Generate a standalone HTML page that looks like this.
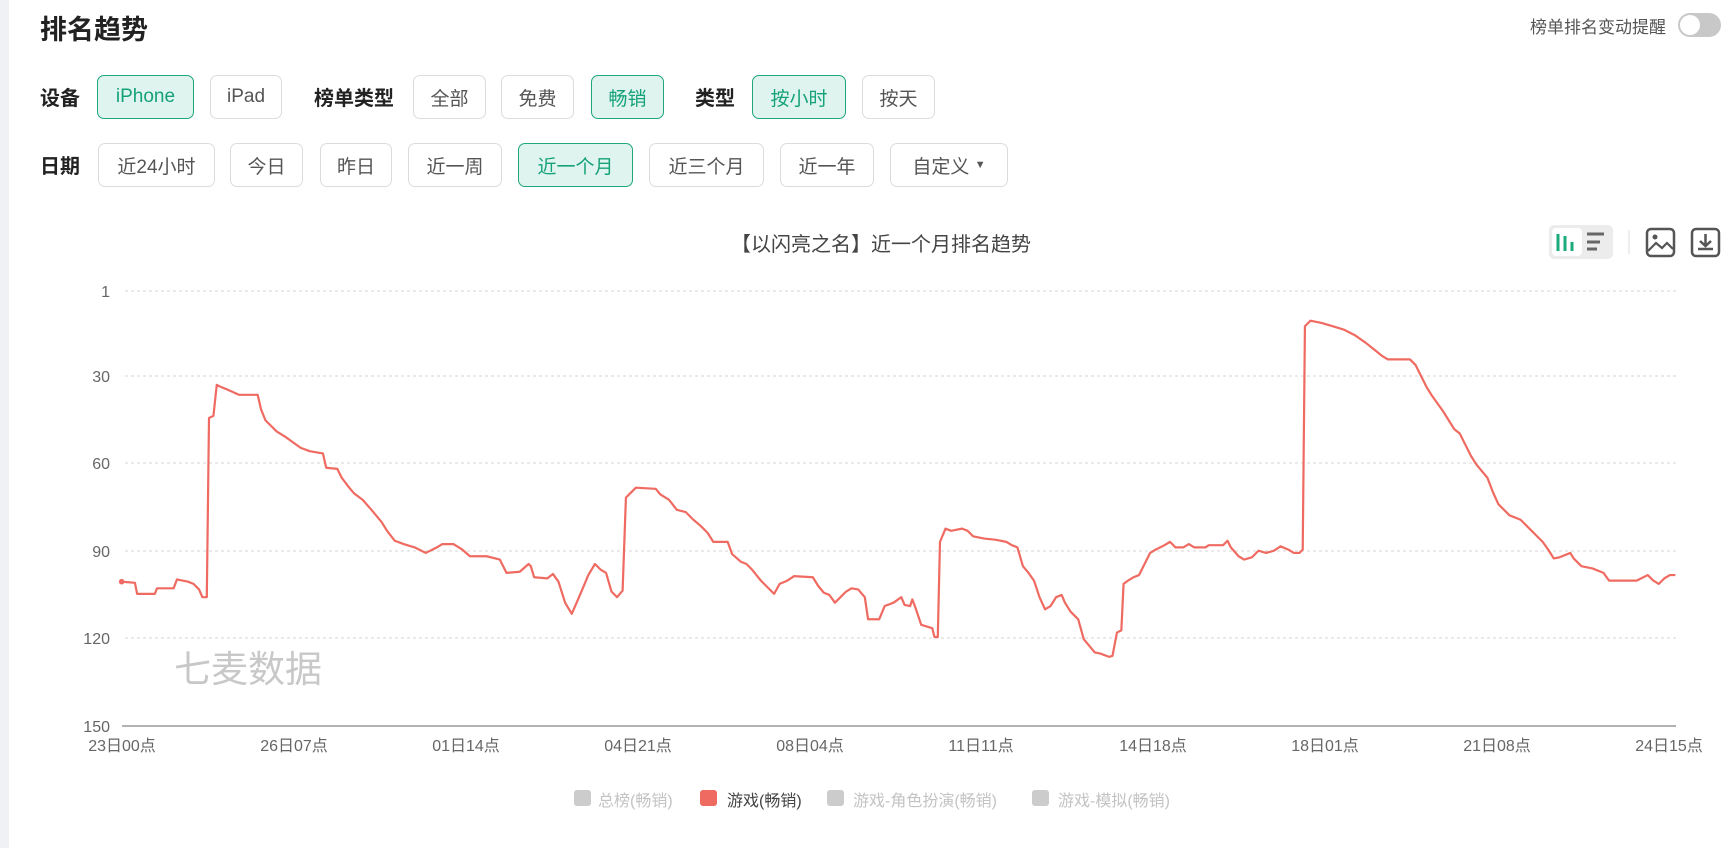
<!DOCTYPE html>
<html><head><meta charset="utf-8">
<style>
*{margin:0;padding:0;box-sizing:border-box}
body{width:1734px;height:848px;background:#fff;position:relative;overflow:hidden;font-family:"Liberation Sans","Noto Sans CJK SC",sans-serif;color:#333}
.strip{position:absolute;left:0;top:0;width:9px;height:848px;background:#f0f1f5}
.t{position:absolute;white-space:nowrap}
.title{left:40px;top:8px;font-size:27px;font-weight:bold;color:#222}
.lbl{font-size:20px;font-weight:bold;color:#222;line-height:43px}
.btn{position:absolute;height:44px;border:1px solid #dcdcdc;border-radius:7px;font-size:19px;color:#555;display:flex;align-items:center;justify-content:center;white-space:nowrap;background:#fff}
.on{background:#dff4ee;border-color:#1fa67c;color:#15a279}
.r1{top:75px}.r2{top:143px}
.lg{font-size:16px;color:#c3c3c3;top:787px}
.sq{position:absolute;top:790px;width:17px;height:16px;border-radius:3px;background:#ccc}
</style></head><body>
<div class="strip"></div>
<div class="t title">排名趋势</div>
<div class="t" style="left:1530px;top:13px;font-size:17px;color:#555">榜单排名变动提醒</div>
<div style="position:absolute;left:1678px;top:13px;width:43px;height:24px;border-radius:12px;background:#c8c8c8"><div style="position:absolute;left:2px;top:2px;width:20px;height:20px;border-radius:10px;background:#fff"></div></div>

<div class="t lbl" style="left:40px;top:78px">设备</div>
<div class="btn r1 on" style="left:97px;width:97px">iPhone</div>
<div class="btn r1" style="left:210px;width:72px">iPad</div>
<div class="t lbl" style="left:314px;top:78px">榜单类型</div>
<div class="btn r1" style="left:413px;width:73px">全部</div>
<div class="btn r1" style="left:501px;width:73px">免费</div>
<div class="btn r1 on" style="left:591px;width:73px">畅销</div>
<div class="t lbl" style="left:695px;top:78px">类型</div>
<div class="btn r1 on" style="left:752px;width:94px">按小时</div>
<div class="btn r1" style="left:862px;width:73px">按天</div>

<div class="t lbl" style="left:40px;top:146px">日期</div>
<div class="btn r2" style="left:98px;width:117px">近24小时</div>
<div class="btn r2" style="left:230px;width:73px">今日</div>
<div class="btn r2" style="left:320px;width:72px">昨日</div>
<div class="btn r2" style="left:408px;width:94px">近一周</div>
<div class="btn r2 on" style="left:518px;width:115px">近一个月</div>
<div class="btn r2" style="left:649px;width:115px">近三个月</div>
<div class="btn r2" style="left:780px;width:94px">近一年</div>
<div class="btn r2" style="left:890px;width:118px">自定义&nbsp;<span style="font-size:11px">▼</span></div>

<div class="t" style="left:0;width:1762px;text-align:center;top:228px;font-size:20px;color:#444">【以闪亮之名】近一个月排名趋势</div>

<svg style="position:absolute;left:0;top:0" width="1734" height="848">
<rect x="1549" y="225" width="64" height="34" rx="5" fill="#ececec"/>
<rect x="1552" y="228" width="30" height="28" rx="4" fill="#fff"/>
<g stroke="#1aaa7c" stroke-width="3"><line x1="1558" y1="234" x2="1558" y2="251"/><line x1="1565" y1="236" x2="1565" y2="251"/><line x1="1572" y1="242" x2="1572" y2="251"/></g>
<g stroke="#666" stroke-width="3"><line x1="1587" y1="234" x2="1604" y2="234"/><line x1="1587" y1="242" x2="1600" y2="242"/><line x1="1587" y1="249" x2="1597" y2="249"/></g>
<line x1="1629" y1="230" x2="1629" y2="254" stroke="#ddd"/>
<rect x="1647" y="229" width="27" height="27" rx="4" fill="none" stroke="#555" stroke-width="2.5"/>
<circle cx="1655" cy="237" r="2.5" fill="#555"/>
<path d="M1648 251 L1656 243 L1662 248 L1667 243 L1673 249" fill="none" stroke="#555" stroke-width="2.2"/>
<rect x="1692" y="229" width="27" height="27" rx="4" fill="none" stroke="#555" stroke-width="2.5"/>
<path d="M1705.5 234 V246 M1700 241 L1705.5 246 L1711 241 M1698 249 H1713" fill="none" stroke="#555" stroke-width="2.5"/>
<g stroke="#d5d5d5" stroke-dasharray="3,3">
<line x1="125" y1="291" x2="1676" y2="291"/><line x1="125" y1="376" x2="1676" y2="376"/><line x1="125" y1="463" x2="1676" y2="463"/><line x1="125" y1="551" x2="1676" y2="551"/><line x1="125" y1="638" x2="1676" y2="638"/>
</g>
<line x1="122" y1="726" x2="1676" y2="726" stroke="#999" stroke-width="1.5"/>
<text x="248" y="682" font-size="37" fill="#c8c8c8" text-anchor="middle" font-family="Liberation Sans,Noto Sans CJK SC,sans-serif">七麦数据</text>
<g transform="scale(1.10587)">
<circle cx="110" cy="526" r="2.5" fill="#ef6b62"/>
<polyline fill="none" stroke="#ef6b62" stroke-width="2" stroke-linejoin="round" points="110,526 122,527 124,537 140,537 142,532 157,532 160,524 170,526 175,528 180,533 183,540 187,540 189,378 193,376 196,348 200,350 205,352 216,357 233,357 236,370 240,380 245,385 250,390 258,395 265,400 272,405 280,408 292,410 295,423 305,424 309,432 315,440 320,446 328,452 335,460 340,466 345,472 350,480 357,489 365,492 375,495 385,500 395,495 400,492 410,492 418,497 425,503 440,503 452,506 458,518 470,517 478,510 480,512 483,522 495,523 500,519 505,526 511,545 517,555 521,546 527,532 532,520 538,510 543,515 548,518 553,535 558,540 563,534 566,450 570,446 575,441 593,442 597,447 605,452 612,461 620,463 627,470 633,475 640,482 645,490 658,490 662,501 670,508 675,510 680,515 688,525 693,530 700,537 705,528 712,525 718,521 735,522 740,530 745,536 750,538 755,545 760,540 765,535 770,532 776,533 782,540 785,560 795,560 800,548 808,545 815,540 818,547 823,548 825,542 828,550 833,565 843,568 845,576 848,576 850,490 855,478 860,480 870,478 875,480 880,485 890,487 900,488 910,490 915,493 920,495 925,512 930,518 935,525 940,540 945,551 950,548 955,540 960,538 963,545 968,553 975,560 980,578 990,590 995,591 1003,594 1006,593 1010,572 1014,570 1016,528 1020,525 1025,522 1030,520 1035,510 1040,500 1045,497 1053,493 1058,490 1063,495 1070,495 1075,492 1080,495 1090,495 1093,493 1106,493 1110,489 1113,495 1120,503 1125,506 1132,504 1138,498 1145,500 1152,498 1158,494 1165,497 1170,500 1175,500 1178,497 1180,295 1185,290 1195,292 1205,295 1215,298 1225,303 1235,310 1245,318 1250,322 1255,325 1275,325 1280,330 1285,340 1290,350 1295,358 1300,365 1305,372 1310,380 1315,388 1320,392 1325,402 1330,412 1335,420 1345,432 1350,445 1355,456 1365,466 1375,470 1380,475 1385,480 1390,485 1395,490 1400,497 1405,505 1410,504 1420,500 1423,505 1430,512 1440,514 1450,518 1455,525 1460,525 1480,525 1490,520 1495,525 1500,528 1505,523 1510,520 1515,520"/>
</g>
<g font-size="16" fill="#666" text-anchor="end" font-family="Liberation Sans,Noto Sans CJK SC,sans-serif">
<text x="110" y="297">1</text><text x="110" y="382">30</text><text x="110" y="469">60</text><text x="110" y="557">90</text><text x="110" y="644">120</text><text x="110" y="732">150</text>
</g>
<g font-size="16" fill="#666" text-anchor="middle" font-family="Liberation Sans,Noto Sans CJK SC,sans-serif">
<text x="122" y="751">23日00点</text><text x="294" y="751">26日07点</text><text x="466" y="751">01日14点</text><text x="638" y="751">04日21点</text><text x="810" y="751">08日04点</text><text x="981" y="751">11日11点</text><text x="1153" y="751">14日18点</text><text x="1325" y="751">18日01点</text><text x="1497" y="751">21日08点</text><text x="1669" y="751">24日15点</text>
</g>
</svg>

<div class="sq" style="left:574px"></div><div class="t lg" style="left:598px">总榜(畅销)</div>
<div class="sq" style="left:700px;background:#ef6b62"></div><div class="t lg" style="left:727px;color:#444">游戏(畅销)</div>
<div class="sq" style="left:827px"></div><div class="t lg" style="left:853px">游戏-角色扮演(畅销)</div>
<div class="sq" style="left:1032px"></div><div class="t lg" style="left:1058px">游戏-模拟(畅销)</div>
</body></html>
